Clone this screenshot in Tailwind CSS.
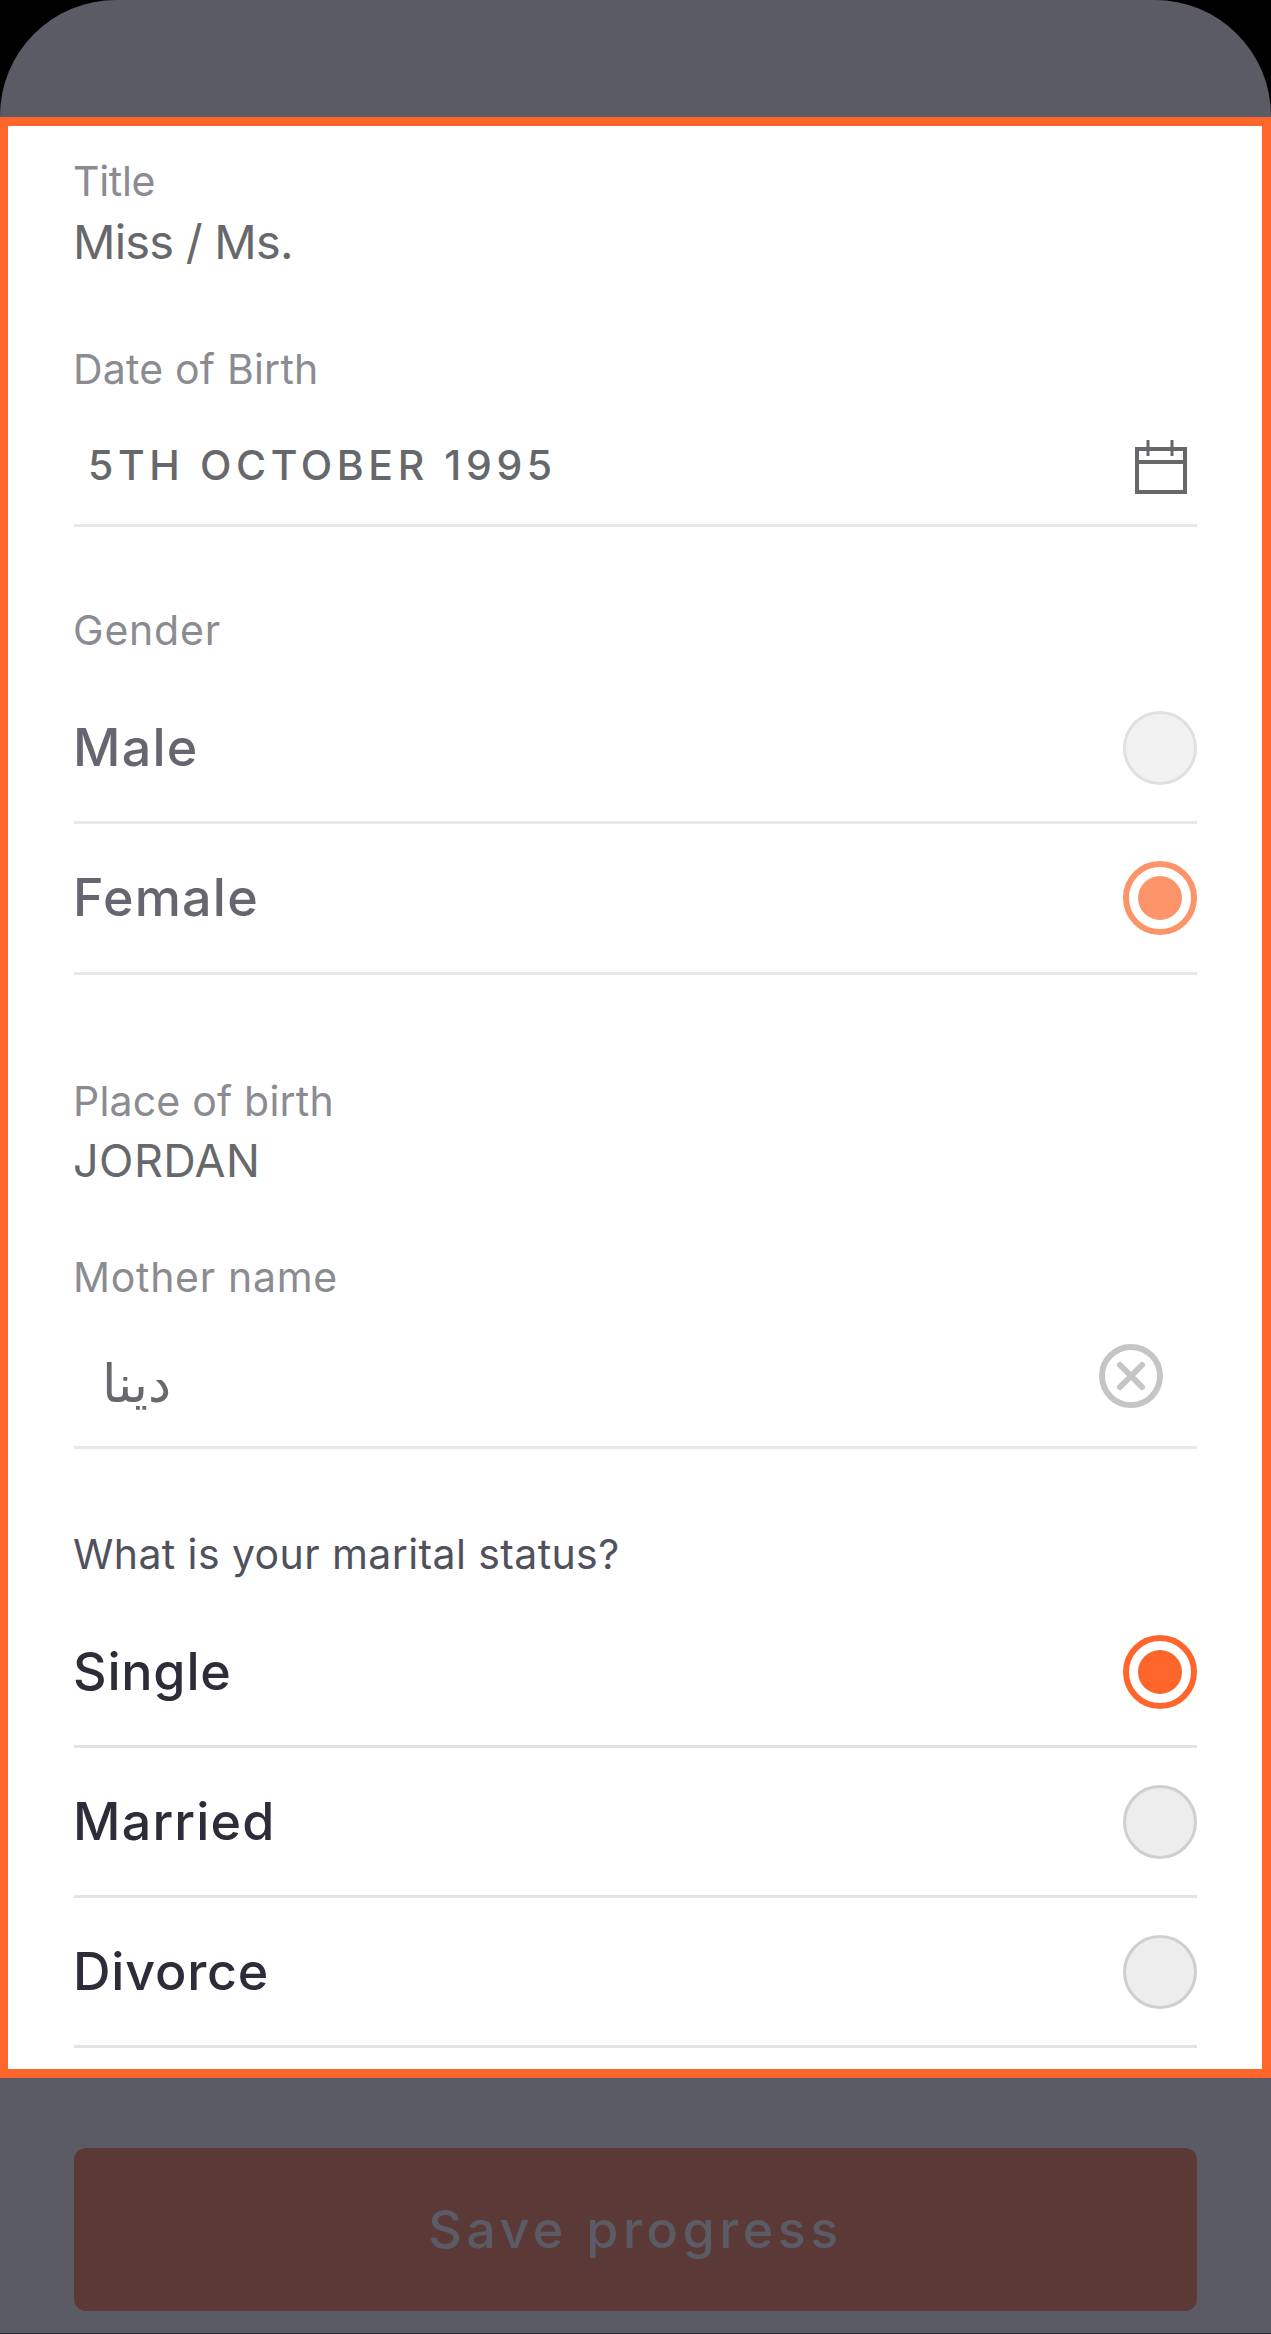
<!DOCTYPE html>
<html><head><meta charset="utf-8"><script src="https://cdn.jsdelivr.net/npm/@tailwindcss/browser@4"></script></head>
<body class="bg-black">
<div class="w-[1271px] h-[2334px] flex flex-col font-['Inter',sans-serif] overflow-hidden">
  <div class="h-[117px] shrink-0 bg-[#5b5b66] rounded-t-[116px]"></div>
  <main class="h-[1961px] shrink-0 bg-white border-[9px] border-l-8 border-[#fd652a] pl-[66px] pr-[65px] pt-[31px]">
    <p class="-ml-[1px] text-[41px] leading-[48px] tracking-[-0.3px] text-[#8b8c92]">Title</p>
    <p class="-ml-[1px] mt-[9px] text-[47px] leading-[56px] tracking-[-0.8px] text-[#66686b]">Miss / Ms.</p>
    <p class="-ml-[1px] mt-[75px] text-[41px] leading-[48px] tracking-[0.2px] text-[#8b8c92]">Date of Birth</p>
    <div class="h-[134px] flex items-center justify-between pl-[14px] pr-[10px] pt-[17px] border-b-[3px] border-[#e8e8ea]">
      <span class="mb-1 text-[41px] leading-[50px] font-medium tracking-[4.6px] text-[#66686b]">5TH OCTOBER 1995</span>
      <svg class="w-[52px] h-[54px]" viewBox="0 0 52 54" fill="none" stroke="#66686b" stroke-width="4"><rect x="2" y="9" width="48" height="43"/><path d="M2 22h48"/><path d="M13 0v16M37 0v16" stroke-width="3"/></svg>
    </div>
    <p class="-ml-[1px] mt-[79px] text-[41px] leading-[48px] tracking-[0.8px] text-[#8b8c92]">Gender</p>
    <div class="h-[170px] flex items-center justify-between border-b-[3px] border-[#e8e8ea] pt-[20px] text-[52px] font-medium tracking-[1.2px] text-[#65666f]">
      <span class="-ml-[1px]">Male</span>
      <span class="size-[74px] rounded-full bg-[#f2f2f2] border-[3px] border-[#e0e0e0]"></span>
    </div>
    <div class="h-[151px] flex items-center justify-between border-b-[3px] border-[#e8e8ea] text-[52px] font-medium tracking-[1.2px] text-[#65666f]">
      <span class="-ml-[1px]">Female</span>
      <span class="size-[74px] rounded-full bg-white border-[6px] border-[#fb9468] flex items-center justify-center"><span class="size-[44px] rounded-full bg-[#fb9468]"></span></span>
    </div>
    <p class="-ml-[1px] mt-[102px] text-[41px] leading-[48px] tracking-[0.2px] text-[#8b8c92]">Place of birth</p>
    <p class="-ml-[1px] mt-[8px] text-[45px] leading-[56px] tracking-[0.4px] text-[#66686b]">JORDAN</p>
    <p class="-ml-[1px] mt-[64px] text-[41px] leading-[48px] tracking-[0.7px] text-[#8b8c92]">Mother name</p>
    <div class="h-[148px] flex items-center justify-between pl-[28px] pr-[34px] pt-[5px] border-b-[3px] border-[#e8e8ea]">
      <span class="mt-[16px] text-[52px] leading-[56px] text-[#66686b] font-['DejaVu_Sans',sans-serif]">دينا</span>
      <svg class="w-[64px] h-[64px]" viewBox="0 0 64 64" fill="none" stroke="#c4c5c7"><circle cx="32" cy="32" r="29" stroke-width="6"/><path d="M21 21l22 22M43 21L21 43" stroke-width="6" stroke-linecap="round"/></svg>
    </div>
    <p class="-ml-[1px] mt-[81px] text-[41px] leading-[48px] tracking-[0.4px] text-[#50515d]">What is your marital status?</p>
    <div class="h-[170px] pt-[20px] flex items-center justify-between border-b-[3px] border-[#e3e3e3] text-[52px] font-medium tracking-[0.8px] text-[#2d2d3a]">
      <span class="-ml-[1px]">Single</span>
      <span class="size-[74px] rounded-full bg-white border-[6px] border-[#fd652a] flex items-center justify-center"><span class="size-[44px] rounded-full bg-[#fd652a]"></span></span>
    </div>
    <div class="h-[150px] flex items-center justify-between border-b-[3px] border-[#e3e3e3] text-[52px] font-medium tracking-[1.2px] text-[#2d2d3a]">
      <span class="-ml-[1px]">Married</span>
      <span class="size-[74px] rounded-full bg-[#ededed] border-[3px] border-[#cfcfcf]"></span>
    </div>
    <div class="h-[150px] flex items-center justify-between border-b-[3px] border-[#e3e3e3] text-[52px] font-medium tracking-[0.8px] text-[#2d2d3a]">
      <span class="-ml-[1px]">Divorce</span>
      <span class="size-[74px] rounded-full bg-[#ededed] border-[3px] border-[#cfcfcf]"></span>
    </div>
  </main>
  <footer class="h-[256px] shrink-0 bg-[#5b5b66] border-b border-[#2a2a33] px-[74px] pt-[70px]">
    <button class="w-full h-[163px] rounded-[12px] bg-[#5b3937] text-[52px] font-medium tracking-[4.5px] text-[#5b5b66]">Save progress</button>
  </footer>
</div>
</body></html>
